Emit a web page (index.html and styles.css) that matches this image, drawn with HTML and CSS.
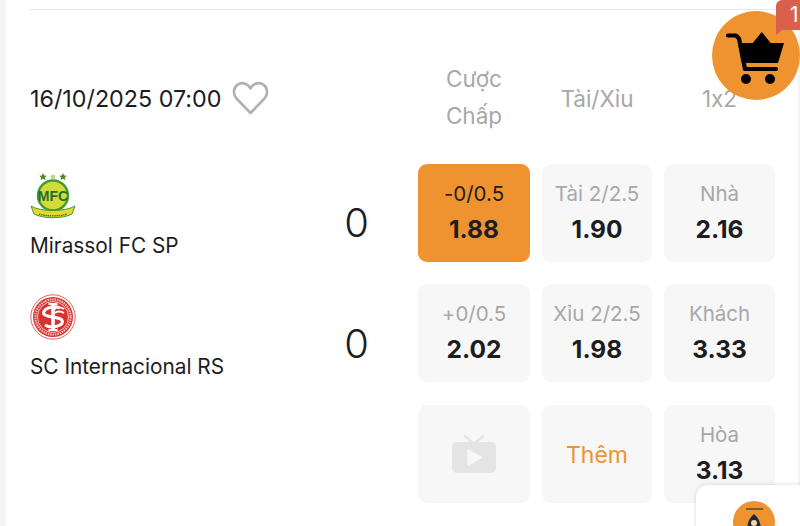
FILE: index.html
```html
<!DOCTYPE html>
<html lang="vi">
<head>
<meta charset="utf-8">
<title>Kèo</title>
<link rel="stylesheet" href="styles.css">
</head>
<body>
<main class="card">
  <hr class="divider">
  <section class="match">
    <div class="info">
      <div class="when">
        <span>16/10/2025 07:00</span>
        <svg class="heart" viewBox="0 0 37 34" width="37" height="34"><path d="M18.500 32 L4.500 17.500 C0.500 13 1.500 6.500 5.500 3.800 C9.500 0.800 15.500 1.800 18.500 7.500 C21.500 1.800 27.500 0.800 31.500 3.800 C35.500 6.500 36.500 13 32.500 17.500 Z" fill="none" stroke="#b0b0b0" stroke-width="2.600" stroke-linejoin="round"/></svg>
      </div>
      <div class="team">
        <div class="team-text">
          <svg class="logo" viewBox="0 0 46 46" width="46" height="46">
            <g fill="#4d8a2c"><path d="M13 0l1.200 2.400 2.600.3-1.900 1.800.5 2.500-2.400-1.200-2.400 1.200.5-2.500-1.900-1.800 2.600-.3z"/><path d="M33 0l1.200 2.400 2.600.3-1.900 1.800.5 2.500-2.400-1.200-2.400 1.200.5-2.500-1.900-1.800 2.600-.3z"/></g>
            <path d="M23 .5l1 2 2.200.3-1.600 1.500.4 2.100-2-1-2 1 .4-2.100-1.600-1.500 2.200-.3z" fill="#b9d28a"/>
            <circle cx="23" cy="22.500" r="15" fill="#d3da3a" stroke="#3f9a35" stroke-width="2.400"/>
            <text x="23" y="28" class="logo-mfc">MFC</text>
            <path d="M1 33 C10 39 36 39 45 33 L42 41 C32 46 14 46 4 41 Z" fill="#e7d92c" stroke="#3f9a35" stroke-width="1"/>
            <path d="M9 41 C17 43.500 29 43.500 37 41" fill="none" stroke="#2f7a35" stroke-width="1.400" stroke-dasharray="1.500 .7"/>
          </svg>
          <span class="team-name">Mirassol FC SP</span>
        </div>
        <span class="score">0</span>
      </div>
      <div class="team">
        <div class="team-text">
          <svg class="logo" viewBox="0 0 46 46" width="46" height="46">
            <circle cx="23" cy="23" r="22.200" fill="#fff" stroke="#e0605a" stroke-width="1"/>
            <circle cx="23" cy="23" r="20" fill="#d8322e"/>
            <circle cx="23" cy="23" r="17.600" fill="none" stroke="#f3c3c0" stroke-width="2.200" stroke-dasharray="1.500 .9"/>
            <circle cx="23" cy="23" r="15.500" fill="#d8322e" stroke="#fff" stroke-width=".7"/>
            <path d="M23 10v26" stroke="#fff" stroke-width="3.600"/>
            <path d="M18.500 10h9M18.500 36h9" stroke="#fff" stroke-width="2"/>
            <path d="M30 14 C24 11 14 14 13.500 19 C13.500 24 32 22 32.500 27.500 C32.500 32 21 35 15 31" fill="none" stroke="#fff" stroke-width="3"/>
            <path d="M34 15 C30 12.500 26 13 24 16 M34 19 C31 17 27 17 25 19" fill="none" stroke="#fff" stroke-width="1.800"/>
          </svg>
          <span class="team-name">SC Internacional RS</span>
        </div>
        <span class="score">0</span>
      </div>
    </div>
    <div class="odds">
      <div class="head head-two">Cược<br>Chấp</div>
      <div class="head">Tài/Xỉu</div>
      <div class="head">1x2</div>

      <div class="cell cell-active"><span class="label">-0/0.5</span><b class="value">1.88</b></div>
      <div class="cell"><span class="label">Tài 2/2.5</span><b class="value">1.90</b></div>
      <div class="cell"><span class="label">Nhà</span><b class="value">2.16</b></div>

      <div class="cell"><span class="label">+0/0.5</span><b class="value">2.02</b></div>
      <div class="cell"><span class="label">Xỉu 2/2.5</span><b class="value">1.98</b></div>
      <div class="cell"><span class="label">Khách</span><b class="value">3.33</b></div>

      <div class="cell cell-plain">
        <svg class="tv" viewBox="0 0 46 40" width="46" height="40">
          <path d="M13 1.500 L22 9 M33 1.500 L24 9" stroke="#e4e4e4" stroke-width="2.600" fill="none"/>
          <rect x="1" y="8" width="44" height="31" rx="5" fill="#e4e4e4"/>
          <path d="M16.500 15 L32 23.500 L16.500 32 Z" fill="#f7f7f7"/>
        </svg>
      </div>
      <div class="cell cell-plain"><span class="more">Thêm</span></div>
      <div class="cell"><span class="label">Hòa</span><b class="value">3.13</b></div>
    </div>
  </section>
</main>

<aside class="cart">
  <svg viewBox="0 0 60 52" width="60" height="52">
    <path d="M3 3.500 H11 L14 6.500 L20 37 H51" fill="none" stroke="#000" stroke-width="4.200" stroke-linecap="round" stroke-linejoin="round"/>
    <path d="M13 11 H59 L53 31 H17 Z" fill="#000"/>
    <path d="M27.700 11 L36.700 0 L45.700 11 Z" fill="#000"/>
    <circle cx="21" cy="47" r="5" fill="#000"/>
    <circle cx="45" cy="47" r="5" fill="#000"/>
  </svg>
  <span class="badge">1</span>
</aside>

<aside class="helper">
  <span class="helper-icon">
    <svg viewBox="0 0 42 42" width="42" height="42">
      <path d="M13 8 H30" stroke="#3a3a3a" stroke-width="1.300"/>
      <path d="M21 13 C26 17 28 23 28 30 H14 C14 23 16 17 21 13 Z" fill="#1f2733"/>
      <circle cx="21" cy="22" r="3" fill="#f0d9b0"/>
    </svg>
  </span>
</aside>
</body>
</html>
```
FILE: styles.css
```css
* { box-sizing: border-box; }
html, body { margin: 0; height: 100%; }
body {
  width: 800px;
  height: 526px;
  overflow: hidden;
  background: #f4f4f4;
  padding: 0 2px 0 6px;
  font-family: Inter, "Noto Sans", sans-serif;
  font-feature-settings: "calt" 0;
  position: relative;
  color: #1d1d1f;
}
.card {
  background: #fff;
  height: 100%;
  padding: 9px 0 0 24px;
}
.divider {
  border: 0;
  height: 1px;
  background: #e6e6e6;
  margin: 0;
}
.match {
  display: flex;
  padding-top: 52px;
}
.info { width: 388px; flex: none; }
.when {
  height: 80px;
  display: flex;
  align-items: center;
  gap: 11px;
  font-size: 23.300px;
  white-space: nowrap;
  padding: 1px 0 9px;
}
.heart { flex: none; }
.team {
  height: 120.500px;
  display: flex;
  justify-content: space-between;
  padding-right: 49px;
  align-items: center;
}
.team:nth-child(2) { margin-top: 21px; }
.team-text {
  align-self: flex-start;
  display: flex;
  flex-direction: column;
  align-items: flex-start;
  gap: 15px;
  margin-top: 10px;
}
.logo { display: block; }
.logo-mfc {
  font-family: "Liberation Sans", sans-serif;
  font-size: 14px;
  font-weight: 700;
  fill: #1f6d2f;
  text-anchor: middle;
}
.team-name { font-size: 20.800px; line-height: 24px; white-space: nowrap; }
.score { font-size: 40px; font-weight: 300; line-height: 48px; }
.odds {
  display: grid;
  grid-template-columns: 112px 110px 111px;
  grid-template-rows: 79px 98px 98px 98px;
  column-gap: 12px;
  row-gap: 22.500px;
  flex: none;
}
.head {
  font-size: 22.500px;
  line-height: 36px;
  color: #a8a8a8;
  text-align: center;
  display: flex;
  align-items: center;
  justify-content: center;
  padding-bottom: 6px;
  grid-row: 1;
}
.head-two { line-height: 36.500px; padding-bottom: 8px; }
.cell {
  background: #f7f7f7;
  border-radius: 9px;
  display: flex;
  flex-direction: column;
  align-items: center;
  justify-content: center;
  gap: 7px;
  padding-bottom: 1px;
}
.cell-plain { padding-bottom: 0; }
.cell-active { background: #ee9330; }
.cell-active .label { color: #1d1d1f; }
.label { font-size: 20.500px; line-height: 26px; color: #a8a8a8; white-space: nowrap; }
.value { font-size: 24.500px; line-height: 30px; font-weight: 700; color: #1d1d1f; }
.more { font-size: 23px; line-height: 28px; color: #ee9330; margin-top: 2px; }
.tv { display: block; }
.cart {
  position: absolute;
  left: 712px;
  top: 11px;
  width: 88px;
  height: 89px;
  border-radius: 50%;
  background: #ee9330;
  display: flex;
  align-items: center;
  justify-content: center;
  padding: 5px 2px 0 0;
}
.badge {
  position: absolute;
  left: 64px;
  top: -11px;
  width: 28px;
  height: 30px;
  background: #d9604a;
  color: #fff;
  font-size: 21px;
  border-radius: 6px 0 0 0;
  padding: 2px 0 0 14px;
  line-height: 26px;
}
.badge::after {
  content: "";
  position: absolute;
  left: 0;
  top: 100%;
  border-style: solid;
  border-width: 0 6px 5px 0;
  border-color: transparent #d9604a transparent transparent;
  transform: scaleX(-1);
}
.helper {
  position: absolute;
  left: 696px;
  top: 485px;
  width: 120px;
  height: 60px;
  background: #fff;
  border-radius: 12px;
  box-shadow: 0 0 5px rgba(0,0,0,.15);
  display: flex;
  padding: 16px 0 0 37px;
}
.helper-icon {
  width: 42px;
  height: 42px;
  border-radius: 50%;
  background: #ee9330;
  display: block;
}
```
